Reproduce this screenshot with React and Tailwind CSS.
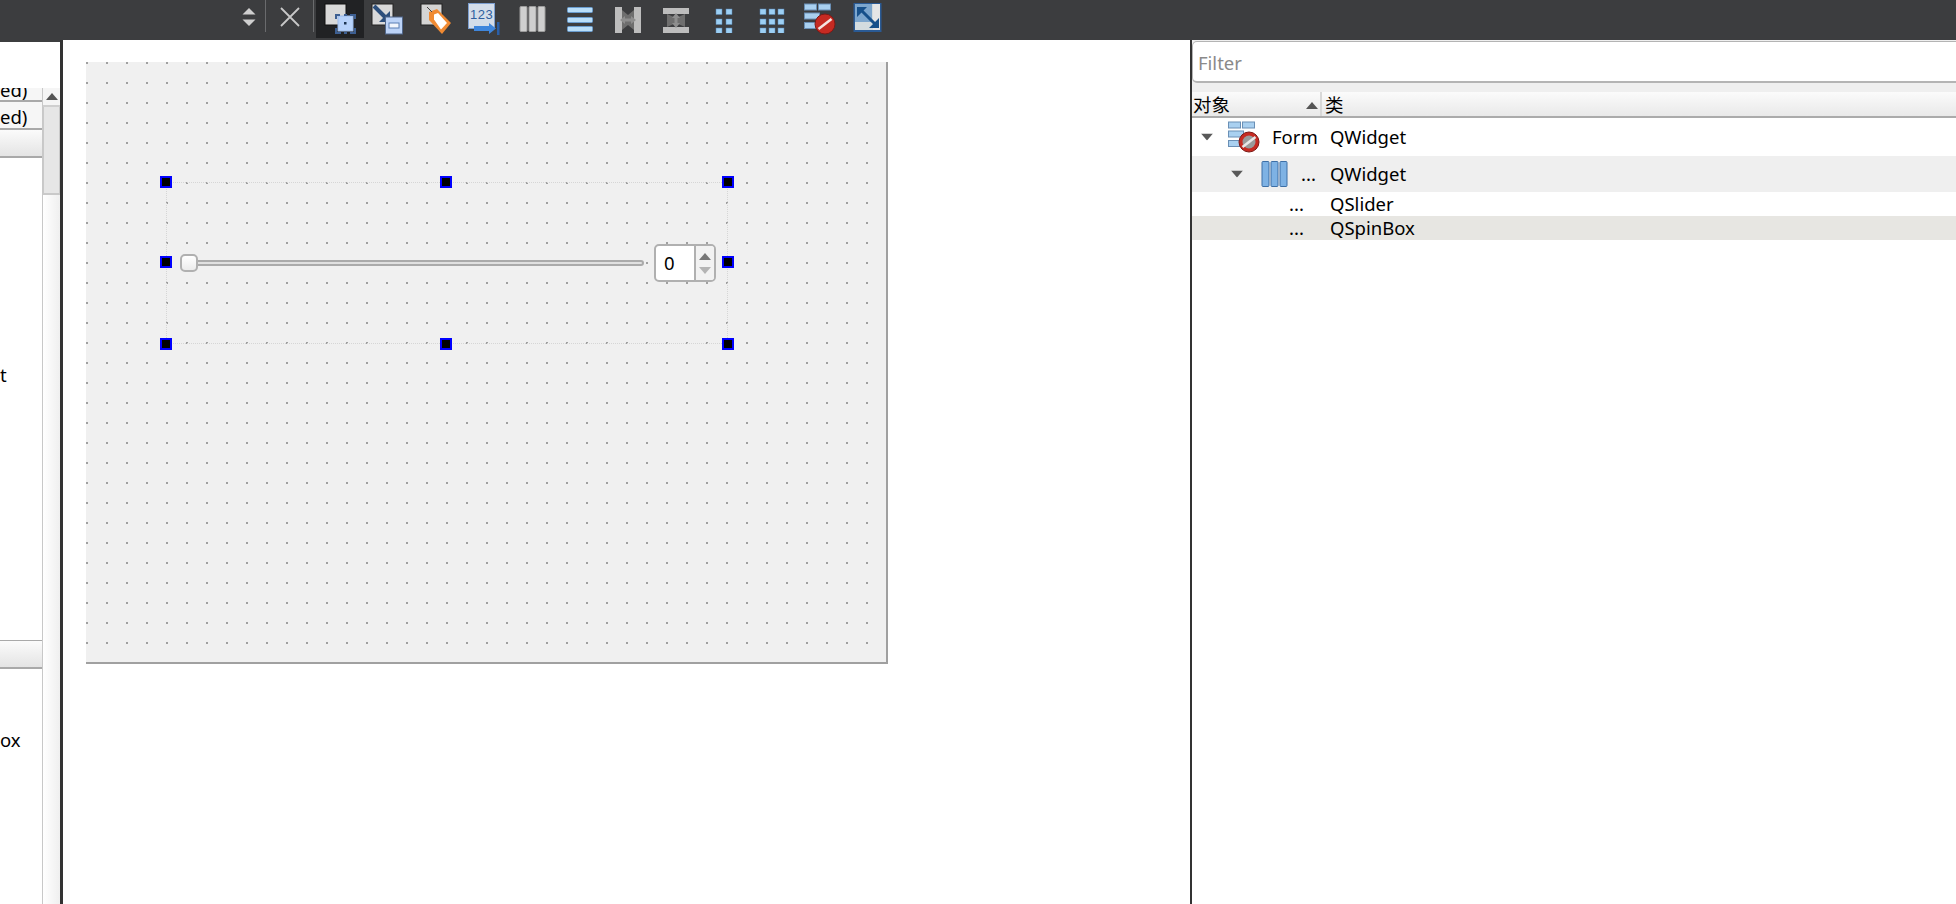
const font = 'font-["Noto_Sans","Noto_Sans_CJK_SC",sans-serif]';

function UpDown() {
  return (
    <svg width="16" height="20" viewBox="0 0 16 20">
      <path d="M8 1l6.500 6.500h-13z" fill="#cfcfcf" />
      <path d="M8 19l-6.500-6.500h13z" fill="#cfcfcf" />
    </svg>
  );
}

function CloseIcon() {
  return (
    <svg width="22" height="22" viewBox="0 0 22 22">
      <path d="M2 2l18 18M20 2L2 20" stroke="#c8c8c8" strokeWidth="1.8" fill="none" />
    </svg>
  );
}

function EditWidgets() {
  return (
    <svg width="34" height="34" viewBox="0 0 34 34">
      <rect x="2" y="2" width="21" height="21" fill="#d9d9d9" stroke="#111" />
      <rect x="15" y="14" width="15" height="15" fill="#b7d2fa" stroke="#9dbcec" />
      <path d="M12 12h5v2h-3v3h-2zM27 12h6v5h-2v-3h-4zM12 26h2v4h4v2h-6zM31 26h2v6h-6v-2h4zM21 12h3v2h-3zM21 30h3v2h-3z" fill="#3d5f92" />
      <rect x="21" y="20" width="2.500" height="2.500" fill="#1c3350" />
    </svg>
  );
}

function EditBuddies() {
  return (
    <svg width="34" height="34" viewBox="0 0 34 34">
      <rect x="1" y="2" width="21" height="21" fill="#d9d9d9" stroke="#222" />
      <path d="M3 4l12 12" stroke="#2d4f7c" strokeWidth="4" />
      <path d="M19 9v11H8z" fill="#2d4f7c" />
      <rect x="14.500" y="15" width="17" height="17" fill="#bcd3f7" stroke="#51678a" />
      <rect x="18" y="21" width="10" height="5" fill="#f1f5fc" stroke="#5a7fb4" />
    </svg>
  );
}

function EditTabOrder() {
  return (
    <svg width="34" height="34" viewBox="0 0 34 34">
      <rect x="2" y="2" width="21" height="21" fill="#d4d4d4" stroke="#222" />
      <path d="M10 10l8-3 14 14-9 11-13-14z" fill="#f08a32" />
      <path d="M15 12.500l4-1.500 9 10-6 6.500-7-10z" fill="#fff" />
      <path d="M8 5l5 5" stroke="#444" strokeWidth="1" />
    </svg>
  );
}

function TabOrder123() {
  return (
    <svg width="34" height="34" viewBox="0 0 34 34">
      <rect x="1.500" y="1.500" width="26" height="25" fill="#d4dde9" stroke="#7d9fd0" />
      <text x="3" y="17" fontSize="13" fontFamily="Liberation Sans" fill="#2f5f9f" letterSpacing="0.5">123</text>
      <path d="M7 24h15v-3l7 5.500-7 5.500v-3H7z" fill="#3f86dc" />
      <rect x="30" y="20" width="2.500" height="13" fill="#2a5fa8" />
    </svg>
  );
}

function ThreeBars({ blue }) {
  const fill = blue ? '#7eb2e4' : '#cfcfcf';
  const line = blue ? '#3d6fa6' : '#9c9c9c';
  return (
    <svg width="30" height="30" viewBox="0 0 30 30">
      {[3, 12, 21].map(x => (
        <rect key={x} x={x} y="2.500" width="7" height="25" rx="1" fill={fill} stroke={line} />
      ))}
    </svg>
  );
}

function HorizontalBars() {
  return (
    <svg width="28" height="30" viewBox="0 0 28 30">
      {[3, 13, 22].map(y => (
        <rect key={y} x="1.500" y={y + 0.5} width="25" height="5" rx="1" fill="#b9def9" stroke="#6a9dcf" />
      ))}
    </svg>
  );
}

function SplitH() {
  return (
    <svg width="28" height="30" viewBox="0 0 28 30">
      <rect x="1" y="3" width="7" height="26" fill="#bdbdbd" />
      <rect x="20" y="3" width="7" height="26" fill="#bdbdbd" />
      <path d="M8 6l6 5 6-5v20l-6-5-6 5z" fill="#6e6e6e" />
      <path d="M6 16l5-4v2.500h6V12l5 4-5 4v-2.500h-6V20z" fill="#8e8e8e" />
    </svg>
  );
}

function SplitV() {
  return (
    <svg width="28" height="30" viewBox="0 0 28 30">
      <rect x="1" y="4" width="26" height="6" fill="#bdbdbd" />
      <rect x="1" y="23" width="26" height="6" fill="#bdbdbd" />
      <path d="M5 10l9 4 9-4v13l-9-4-9 4z" fill="#6e6e6e" />
      <path d="M14 9l4 5h-2.500v5H18l-4 5-4-5h2.500v-5H10z" fill="#8e8e8e" />
    </svg>
  );
}

function GridIcon({ cols }) {
  const xs = cols === 2 ? [1, 11] : [1, 10, 19];
  const w = cols === 2 ? 18 : 26;
  return (
    <svg width={w} height="28" viewBox={`0 0 ${w} 28`}>
      {xs.map(x => [4, 14, 23].map(y => (
        <rect key={`${x}-${y}`} x={x} y={y} width="6" height="5.500" fill="#9ccff4" stroke="#5585b3" strokeWidth="0.5" />
      )))}
    </svg>
  );
}

function FormBroken({ tree }) {
  return (
    <svg width="32" height="32" viewBox="0 0 32 32">
      <rect x="0.500" y="1" width="12" height="6" fill="#a9d0f0" stroke="#6a8fb5" />
      <rect x="14.500" y="1" width="12" height="6" fill="#a9d0f0" stroke="#6a8fb5" />
      <rect x="0.500" y="10" width="15" height="6" fill="#a9d0f0" stroke="#6a8fb5" />
      <rect x="0.500" y="19.500" width="12" height="6" fill="#a9d0f0" stroke="#6a8fb5" />
      <circle cx="21" cy="21" r="10" fill="#c62a22" stroke="#7c1a16" />
      {tree && <circle cx="21" cy="21" r="6.500" fill="#9a9a9a" />}
      <path d="M14.500 26l13-10" stroke={tree ? '#e8e8e8' : '#f5e4e2'} strokeWidth="2.600" />
    </svg>
  );
}

function ResizeIcon() {
  return (
    <svg width="30" height="32" viewBox="0 0 30 32">
      <rect x="0.500" y="0" width="28" height="29" fill="#2a5a94" />
      <rect x="2" y="1" width="25" height="26" fill="#d4dcdf" />
      <rect x="2" y="1" width="17" height="18" fill="#7da6cd" />
      <rect x="20" y="1" width="7" height="26" fill="#e6e6e6" />
      <path d="M8 7l14 14" stroke="#17508a" strokeWidth="3" />
      <path d="M4 4h10l-10 10zM26 25H16l10-10z" fill="#17508a" />
    </svg>
  );
}

const tools = [
  <EditWidgets />, <EditBuddies />, <EditTabOrder />, <TabOrder123 />, <ThreeBars />, <HorizontalBars />,
  <SplitH />, <SplitV />, <GridIcon cols={2} />, <GridIcon cols={3} />, <FormBroken />, <ResizeIcon />,
];

function Toolbar() {
  return (
    <div className="flex h-10 shrink-0 bg-[#3c3d3f] pl-[232px]">
      <div className="flex h-[34px] w-[33px] items-center justify-center"><UpDown /></div>
      <div className="h-8 w-px bg-[#6a6b6d]" />
      <div className="flex h-[34px] w-[47px] items-center justify-center"><CloseIcon /></div>
      <div className="h-8 w-px bg-[#6a6b6d]" />
      <div className="w-[2px]" />
      {tools.map((icon, i) => (
        <div key={i} className={`flex h-[38px] w-12 items-center justify-center ${i === 0 ? 'bg-[#212224]' : ''}`}>
          {icon}
        </div>
      ))}
    </div>
  );
}

function SectionHeader() {
  return <div className="h-[28px] border-b-2 border-[#a9a9a9] bg-gradient-to-b from-[#fbfbfb] to-[#e4e4e4]" />;
}

function LeftPanel() {
  return (
    <div className="mt-[2px] flex w-[60px] shrink-0 flex-col bg-white">
      <div className="h-[46px] shrink-0" />
      <div className="flex min-h-0 flex-1">
        <div className="w-[42px] shrink-0 overflow-hidden text-[18.5px] leading-none text-black">
          <div className="flex h-[14px] items-end overflow-hidden border-b-2 border-[#a9a9a9] bg-[#f6f6f6]">
            <span className="leading-[20px]">ed)</span>
          </div>
          <div className="flex h-[28px] items-center border-b-2 border-[#a9a9a9] bg-[#f6f6f6] pt-[4px]">ed)</div>
          <SectionHeader />
          <div className="flex h-[482px] flex-col">
            <div className="mt-[205px] leading-[24px]">t</div>
          </div>
          <div className="h-px bg-[#a9a9a9]" />
          <SectionHeader />
          <div className="flex flex-col pt-[59px] leading-[24px]">ox</div>
        </div>
        <div className="flex w-[18px] shrink-0 flex-col border-l border-[#c8c8c8] bg-gradient-to-r from-[#ffffff] to-[#efefef]">
          <div className="flex h-[19px] shrink-0 items-center justify-center border-b-2 border-[#cfcfcf] bg-[#f5f5f5]">
            <svg width="12" height="7" viewBox="0 0 12 7"><path d="M6 0l6 7H0z" fill="#555" /></svg>
          </div>
          <div className="h-[88px] shrink-0 border-x border-b-2 border-[#c9c9c9] bg-[#e6e6e6]" />
        </div>
      </div>
    </div>
  );
}

function Handle({ className }) {
  return <div className={`absolute h-3 w-3 border-2 border-[#0000ff] bg-black ${className}`} />;
}

function Slider() {
  return (
    <div className="relative flex h-[18px] flex-1 items-center">
      <div className="h-[6px] w-full rounded-full border-2 border-[#aaaaaa] bg-[#e0e0e0]" />
      <div className="absolute left-0 top-0 h-[18px] w-[18px] rounded-[5px] border-2 border-[#b0b0b0] bg-gradient-to-b from-white to-[#ececec]" />
    </div>
  );
}

function SpinBox() {
  return (
    <div className="flex h-[38px] w-[62px] overflow-hidden rounded-[5px] border-2 border-[#b0b0b0] bg-white">
      <div className="flex w-[38px] items-center pl-[8px] text-[18.5px] leading-none text-black">0</div>
      <div className="flex flex-1 flex-col items-center justify-center gap-[7px] border-l-2 border-[#b0b0b0] bg-[#f2f2f2]">
        <svg width="12" height="7" viewBox="0 0 12 7"><path d="M6 0l6 7H0z" fill="#777" /></svg>
        <svg width="12" height="7" viewBox="0 0 12 7"><path d="M6 7L0 0h12z" fill="#b4b4b4" /></svg>
      </div>
    </div>
  );
}

function FormCanvas() {
  return (
    <div className="relative ml-[23px] mt-[22px] h-[602px] w-[802px] border-b-2 border-r-2 border-[#a0a0a0] bg-[#f0f0f0]">
      <svg className="absolute inset-0" width="800" height="600">
        <defs>
          <pattern id="dots" width="20" height="20" patternUnits="userSpaceOnUse">
            <rect width="2" height="2" fill="#a0a0a0" />
          </pattern>
        </defs>
        <rect width="800" height="600" fill="url(#dots)" />
      </svg>
      <div className="absolute left-[80px] top-[120px] flex h-[162px] w-[562px] items-center gap-[10px] border border-dotted border-[#d6d6d6] pl-[13px] pr-[11px]">
        <Slider />
        <SpinBox />
      </div>
      <Handle className="left-[74px] top-[114px]" />
      <Handle className="left-[354px] top-[114px]" />
      <Handle className="left-[636px] top-[114px]" />
      <Handle className="left-[74px] top-[194px]" />
      <Handle className="left-[636px] top-[194px]" />
      <Handle className="left-[74px] top-[276px]" />
      <Handle className="left-[354px] top-[276px]" />
      <Handle className="left-[636px] top-[276px]" />
    </div>
  );
}

function Row({ className, indent, arrow, icon, name, type }) {
  return (
    <div className={`flex items-center ${className}`}>
      <div className="relative h-full w-[138px] shrink-0">
        {arrow && (
          <svg className={`absolute top-1/2 -translate-y-1/2 ${arrow}`} width="12" height="7" viewBox="0 0 12 7">
            <path d="M6 7L0 0h12z" fill="#595959" />
          </svg>
        )}
        {icon}
        <span className={`absolute top-1/2 -translate-y-1/2 ${indent}`}>{name}</span>
      </div>
      <span>{type}</span>
    </div>
  );
}

function RightPanel() {
  return (
    <div className="flex min-w-0 flex-1 flex-col bg-white text-[18.5px] leading-none text-black">
      <div className="h-[52px] shrink-0 bg-[#efefef] pt-px">
        <div className="flex h-[42px] w-[calc(100%+8px)] items-center rounded-[5px] border border-b-2 border-[#b4b4b4] bg-white pl-[5px] pt-[4px] text-[#8a8a8a]">Filter</div>
      </div>
      <div className="flex h-[26px] shrink-0 border-b-2 border-[#ababab] bg-gradient-to-b from-[#fbfbfb] to-[#e9e9e9]">
        <div className="relative flex w-[130px] items-center border-r-2 border-[#d8d8d8] pl-px pt-[3px]">
          <span>对象</span>
          <svg className="absolute left-[114px] top-[10px]" width="12" height="7" viewBox="0 0 12 7"><path d="M6 0l6 7H0z" fill="#555" /></svg>
        </div>
        <div className="flex items-center pl-[3px] pt-[3px]">类</div>
      </div>
      <Row className="h-[38px]" arrow="left-[9px]" indent="left-[80px]" name="Form" type="QWidget"
        icon={<div className="absolute left-[36px] top-[3px]"><FormBroken tree /></div>} />
      <Row className="h-[36px] bg-[#efefef]" arrow="left-[39px]" indent="left-[109px]" name="..." type="QWidget"
        icon={<div className="absolute left-[67px] top-[3px]"><ThreeBars blue /></div>} />
      <Row className="h-[24px]" indent="left-[97px]" name="..." type="QSlider" />
      <Row className="h-[24px] bg-[#e7e6e2]" indent="left-[97px]" name="..." type="QSpinBox" />
    </div>
  );
}

export default function App() {
  return (
    <div className={`flex h-screen w-screen flex-col overflow-hidden bg-[#3c3d3f] ${font}`}>
      <Toolbar />
      <div className="flex min-h-0 flex-1">
        <LeftPanel />
        <div className="w-[3px] shrink-0 bg-[#333]" />
        <div className="w-[1127px] shrink-0 bg-white">
          <FormCanvas />
        </div>
        <div className="w-[2px] shrink-0 bg-[#333]" />
        <RightPanel />
      </div>
    </div>
  );
}
